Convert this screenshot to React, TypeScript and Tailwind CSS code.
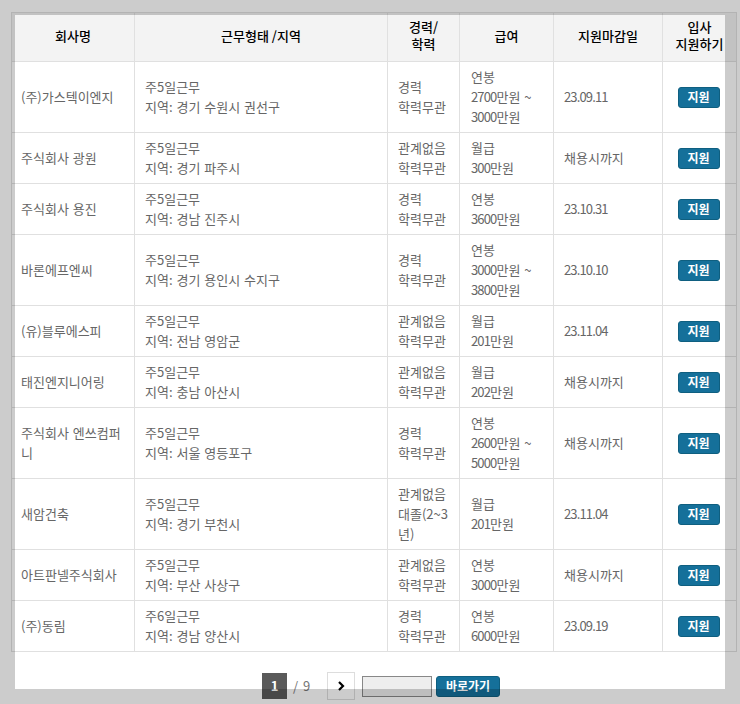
const rows = [
  { company: '(주)가스텍이엔지', work: '주5일근무', area: '지역: 경기 수원시 권선구', exp: ['경력', '학력무관'], pay: ['연봉', '2700만원 ~', '3000만원'], due: '23.09.11' },
  { company: '주식회사 광원', work: '주5일근무', area: '지역: 경기 파주시', exp: ['관계없음', '학력무관'], pay: ['월급', '300만원'], due: '채용시까지' },
  { company: '주식회사 용진', work: '주5일근무', area: '지역: 경남 진주시', exp: ['경력', '학력무관'], pay: ['연봉', '3600만원'], due: '23.10.31' },
  { company: '바론에프엔씨', work: '주5일근무', area: '지역: 경기 용인시 수지구', exp: ['경력', '학력무관'], pay: ['연봉', '3000만원 ~', '3800만원'], due: '23.10.10' },
  { company: '(유)블루에스피', work: '주5일근무', area: '지역: 전남 영암군', exp: ['관계없음', '학력무관'], pay: ['월급', '201만원'], due: '23.11.04' },
  { company: '태진엔지니어링', work: '주5일근무', area: '지역: 충남 아산시', exp: ['관계없음', '학력무관'], pay: ['월급', '202만원'], due: '채용시까지' },
  { company: '주식회사 엔쓰컴퍼니', work: '주5일근무', area: '지역: 서울 영등포구', exp: ['경력', '학력무관'], pay: ['연봉', '2600만원 ~', '5000만원'], due: '채용시까지' },
  { company: '새암건축', work: '주5일근무', area: '지역: 경기 부천시', exp: ['관계없음', '대졸(2~3', '년)'], pay: ['월급', '201만원'], due: '23.11.04' },
  { company: '아트판넬주식회사', work: '주5일근무', area: '지역: 부산 사상구', exp: ['관계없음', '학력무관'], pay: ['연봉', '3000만원'], due: '채용시까지' },
  { company: '(주)동림', work: '주6일근무', area: '지역: 경남 양산시', exp: ['경력', '학력무관'], pay: ['연봉', '6000만원'], due: '23.09.19' },
];

// digits run narrower than the CJK font draws them
function Digits({ text }: { text: string }) {
  return (
    <>
      {text.split(/([\d.]+)/).map((part, idx) =>
        /^[\d.]+$/.test(part) ? (
          <span key={idx} className="tracking-[-0.85px]">{part}</span>
        ) : (
          part
        )
      )}
    </>
  );
}

function Lines({ items, digits }: { items: string[]; digits?: boolean }) {
  return (
    <>
      {items.map((text, idx) => (
        <div key={idx}>{digits ? <Digits text={text} /> : text}</div>
      ))}
    </>
  );
}

export default function App() {
  return (
    <div className="relative h-[704px] w-[740px] overflow-hidden bg-white font-['Noto_Sans_CJK_KR',sans-serif]">
      <div className="pl-[11px] pt-[12px]">
        <table className="w-[725px] table-fixed border-collapse border border-[#e0e0e0] text-[13px] leading-[20px] text-[#666] [word-spacing:1px]">
          <colgroup>
            <col className="w-[123px]" />
            <col className="w-[253px]" />
            <col className="w-[72px]" />
            <col className="w-[94px]" />
            <col className="w-[109px]" />
            <col className="w-[74px]" />
          </colgroup>
          <thead>
            <tr className="h-[49px] bg-[#f3f3f3] text-[13px] font-medium leading-[17px] text-black [word-spacing:0]">
              <th className="border border-[#e0e0e0] pb-[4px] font-medium">회사명</th>
              <th className="border border-[#e0e0e0] pb-[4px] font-medium">근무형태 /지역</th>
              <th className="border border-[#e0e0e0] pb-[4px] font-medium">경력/<br />학력</th>
              <th className="border border-[#e0e0e0] pb-[4px] font-medium">급여</th>
              <th className="border border-[#e0e0e0] pb-[4px] font-medium">지원마감일</th>
              <th className="border border-[#e0e0e0] pb-[4px] font-medium">입사<br />지원하기</th>
            </tr>
          </thead>
          <tbody>
            {rows.map((row, idx) => (
              <tr key={idx}>
                <td className="border border-[#e0e0e0] py-[5px] pl-[9px] pr-[10px]">{row.company}</td>
                <td className="border border-[#e0e0e0] px-[10px] py-[5px]">
                  <div>{row.work}</div>
                  <div>{row.area}</div>
                </td>
                <td className="border border-[#e0e0e0] px-[10px] py-[5px]"><Lines items={row.exp} /></td>
                <td className="border border-[#e0e0e0] py-[5px] pl-[11px] pr-[9px]"><Lines items={row.pay} digits /></td>
                <td className="border border-[#e0e0e0] px-[10px] py-[5px]"><Digits text={row.due} /></td>
                <td className="border border-[#e0e0e0] py-[5px] pr-[2px] text-center">
                  <button type="button" className="h-[21px] w-[42px] rounded-[3px] border border-[#0f5f80] bg-[#15709a] text-[12px] font-bold leading-[18px] text-white">지원</button>
                </td>
              </tr>
            ))}
          </tbody>
        </table>
        <div className="mt-[20px] flex items-center pl-[251px] text-[13px] text-[#777]">
          <span className="flex h-[26px] w-[25px] items-center justify-center bg-[#5a5a5a] text-[13px] font-bold text-white">1</span>
          <span className="ml-[6px] w-[34px] [word-spacing:2px]">/ 9</span>
          <span className="flex h-[28px] w-[28px] items-center justify-center border border-[#ddd]">
            <svg width="9" height="10" viewBox="0 0 9 10"><path d="M2 1l4 4-4 4" fill="none" stroke="#000" strokeWidth="2.2" /></svg>
          </span>
          <span className="ml-[7px] h-[21px] w-[70px] border border-[#888] bg-[#eee]" />
          <button type="button" className="ml-[4px] h-[21px] w-[64px] rounded-[3px] border border-[#0f5f80] bg-[#15709a] text-[12px] font-bold leading-[18px] text-white">바로가기</button>
        </div>
      </div>
      <div className="pointer-events-none absolute inset-0 border-[15px] border-black/20" />
    </div>
  );
}
